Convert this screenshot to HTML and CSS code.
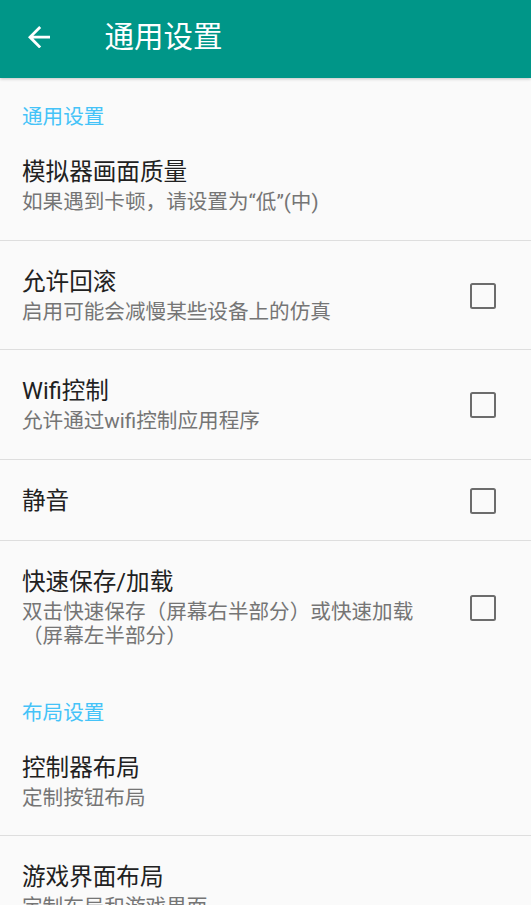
FILE: index.html
```html
<!DOCTYPE html>
<html lang="zh-CN">
<head>
<meta charset="utf-8">
<title>通用设置</title>
<link rel="stylesheet" href="styles.css">
</head>
<body>
<header class="toolbar">
  <svg class="back" viewBox="4 4 16 16" width="22.4" height="22.4" aria-hidden="true"><path d="M20 11H7.83l5.59-5.59L12 4l-8 8 8 8 1.41-1.41L7.83 13H20v-2z" fill="#fff"/></svg>
  <h1 class="toolbar-title">通用设置</h1>
</header>
<main class="prefs">
  <div class="category">通用设置</div>
  <div class="pref">
    <div class="pref-text">
      <div class="pref-title">模拟器画面质量</div>
      <div class="pref-summary">如果遇到卡顿，请设置为“低”(中)</div>
    </div>
  </div>
  <div class="divider"></div>
  <div class="pref">
    <div class="pref-text">
      <div class="pref-title">允许回滚</div>
      <div class="pref-summary">启用可能会减慢某些设备上的仿真</div>
    </div>
    <span class="checkbox"></span>
  </div>
  <div class="divider"></div>
  <div class="pref">
    <div class="pref-text">
      <div class="pref-title">Wifi控制</div>
      <div class="pref-summary">允许通过wifi控制应用程序</div>
    </div>
    <span class="checkbox"></span>
  </div>
  <div class="divider"></div>
  <div class="pref">
    <div class="pref-text">
      <div class="pref-title">静音</div>
    </div>
    <span class="checkbox"></span>
  </div>
  <div class="divider"></div>
  <div class="pref">
    <div class="pref-text">
      <div class="pref-title">快速保存/加载</div>
      <div class="pref-summary">双击快速保存（屏幕右半部分）或快速加载（屏幕左半部分）</div>
    </div>
    <span class="checkbox"></span>
  </div>
  <div class="category">布局设置</div>
  <div class="pref">
    <div class="pref-text">
      <div class="pref-title">控制器布局</div>
      <div class="pref-summary">定制按钮布局</div>
    </div>
  </div>
  <div class="divider"></div>
  <div class="pref">
    <div class="pref-text">
      <div class="pref-title">游戏界面布局</div>
      <div class="pref-summary">定制布局和游戏界面</div>
    </div>
  </div>
</main>
</body>
</html>
```
FILE: styles.css
```css
html, body {
  margin: 0;
  padding: 0;
}
body {
  background: #fafafa;
  font-family: Roboto, "Noto Sans CJK SC", sans-serif;
  width: 531px;
  height: 905px;
  overflow: hidden;
}
.toolbar {
  position: relative;
  z-index: 2;
  height: 78px;
  box-sizing: border-box;
  padding: 0 0 4px 28px;
  background: #009688;
  display: flex;
  align-items: center;
  box-shadow: 0 1px 3px rgba(0, 0, 0, 0.22);
}
.back {
  display: block;
  flex: none;
}
.toolbar-title {
  margin: 0 0 0 54px;
  font-size: 29.5px;
  font-weight: 400;
  color: #ffffff;
  line-height: 40px;
}
.prefs {
  display: flex;
  flex-direction: column;
}
.category {
  padding: 27px 22px 2px;
  line-height: 24px;
  font-size: 20.6px;
  color: #45c3f8;
}
.pref {
  display: flex;
  align-items: center;
  padding: 27px 35px 25.5px 22px;
}
.pref-text {
  flex: 1;
  min-width: 0;
}
.pref-title {
  font-size: 23.6px;
  line-height: 28px;
  color: #212121;
}
.pref-summary {
  margin-top: 4px;
  font-size: 20.6px;
  line-height: 24px;
  color: #757575;
}
.checkbox {
  flex: none;
  width: 26px;
  height: 26px;
  box-sizing: border-box;
  border: 2.8px solid #6c6c6c;
  border-radius: 2.5px;
  margin-left: 45px;
}
.divider {
  height: 1px;
  background: #dedede;
}
```
